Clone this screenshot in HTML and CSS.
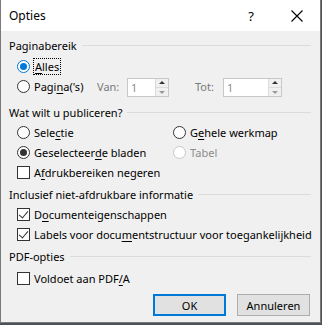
FILE: index.html
```html
<!DOCTYPE html>
<html lang="nl">
    <head>
        <meta charset="UTF-8" />
        <meta name="viewport" content="width=device-width, initial-scale=1.0" />
        <title>Opties</title>
        <link rel="stylesheet" href="styles.css">
    </head>
    <body>
        <div class="dialog">
            <div class="titlebar">
                <span class="title">Opties</span>
                <span class="help">?</span>
                <span class="close">
                    <svg width="12" height="12" viewBox="0 0 12 12"><path d="M0.5 0.5 L11.5 11.5 M11.5 0.5 L0.5 11.5" stroke="#000" stroke-width="1.1" fill="none"/></svg>
                </span>
            </div>
            <div class="content">
                <div class="group g1">
                    <div class="legend"><span>Paginabereik</span></div>
                    <div class="rows">
                        <div class="row">
                            <label class="opt"><span class="radio on"></span><span class="focus"><u>A</u>lles</span></label>
                        </div>
                        <div class="row">
                            <label class="opt pages"><span class="radio"></span>Pagi<u>n</u>a('s)</label>
                            <span class="dim van">Van:</span>
                            <span class="spin"><span class="val">1</span><span class="arrows"><i class="up"></i><i class="down"></i></span></span>
                            <span class="dim tot">Tot:</span>
                            <span class="spin wide"><span class="val">1</span><span class="arrows"><i class="up"></i><i class="down"></i></span></span>
                        </div>
                    </div>
                </div>

                <div class="group g2">
                    <div class="legend"><span>Wat wilt u publiceren?</span></div>
                    <div class="rows">
                        <div class="grid2">
                            <label class="opt"><span class="radio"></span>Sele<u>c</u>tie</label>
                            <label class="opt"><span class="radio"></span>G<u>e</u>hele werkmap</label>
                            <label class="opt"><span class="radio dot"></span>Geselecteer<u>d</u>e bladen</label>
                            <label class="opt disabled"><span class="radio"></span>Tabel</label>
                        </div>
                        <div class="row">
                            <label class="opt"><span class="check"></span>A<u>f</u>drukbereiken negeren</label>
                        </div>
                    </div>
                </div>

                <div class="group g3">
                    <div class="legend"><span>Inclusief niet-afdrukbare informatie</span></div>
                    <div class="rows">
                        <div class="row short">
                            <label class="opt"><span class="check on"></span>D<u>o</u>cumenteigenschappen</label>
                        </div>
                        <div class="row">
                            <label class="opt"><span class="check on"></span>Labels voor docu<u>m</u>entstructuur voor toegankelijkheid</label>
                        </div>
                    </div>
                </div>

                <div class="group g4">
                    <div class="legend"><span>PDF-opties</span></div>
                    <div class="rows">
                        <div class="row">
                            <label class="opt"><span class="check"></span>Voldoet aan PDF<u>/</u>A</label>
                        </div>
                    </div>
                </div>

                <div class="buttons">
                    <button class="btn default">OK</button>
                    <button class="btn">Annuleren</button>
                </div>
            </div>
        </div>
    </body>
</html>
```

FILE: styles.css
```css
* {
    padding: 0;
    margin: 0;
    box-sizing: border-box;
}
body {
    background-color: #4e5257;
    font-family: "Noto Sans", "Open Sans", sans-serif;
    font-size: 11px;
    color: #000;
}
.dialog {
    width: 321px;
    height: 323px;
    background-color: #f0f0f0;
    border: 1px solid #7a7a7a;
    border-top: none;
}
.titlebar {
    height: 31px;
    background-color: #fff;
    display: flex;
    align-items: center;
}
.title {
    margin-left: 8px;
    font-size: 12px;
    flex: 1;
}
.help {
    width: 46px;
    text-align: center;
    font-size: 13px;
}
.close {
    width: 46px;
    display: flex;
    justify-content: center;
}

.content {
    padding: 6px 8px 0 8px;
}
.legend {
    display: flex;
    align-items: center;
    height: 16px;
}
.legend::after {
    content: "";
    flex: 1;
    height: 1px;
    background-color: #dcdcdc;
    margin-left: 5px;
    margin-right: 1px;
}
.g2 {
    margin-top: 8px;
}
.g3,
.g4 {
    margin-top: 4px;
}
.g1 .rows,
.g3 .rows {
    margin-top: 3px;
}
.g2 .rows {
    margin-top: 2px;
}
.g4 .rows {
    margin-top: 4px;
}
.row {
    display: flex;
    align-items: center;
    height: 20px;
    padding-left: 8px;
}
.row.short {
    height: 19px;
}
.grid2 {
    display: grid;
    grid-template-columns: 156px 1fr;
    grid-auto-rows: 20px;
    padding-left: 8px;
}
.opt {
    display: flex;
    align-items: center;
    white-space: nowrap;
}
.opt u {
    text-decoration-thickness: 1px;
    text-underline-offset: 2px;
}
.disabled {
    color: #8c8c8c;
}

.radio {
    width: 13px;
    height: 13px;
    border: 1px solid #333;
    border-radius: 50%;
    background-color: #fff;
    margin-right: 4px;
    position: relative;
    flex-shrink: 0;
}
.radio.on {
    border-color: #0078d7;
}
.radio.on::after,
.radio.dot::after {
    content: "";
    position: absolute;
    left: 2px;
    top: 2px;
    width: 7px;
    height: 7px;
    border-radius: 50%;
    background-color: #0078d7;
}
.radio.dot::after {
    background-color: #333;
}
.disabled .radio {
    border-color: #c8c8c8;
}
.check {
    width: 13px;
    height: 13px;
    border: 1px solid #333;
    background-color: #fff;
    margin-right: 4px;
    position: relative;
    flex-shrink: 0;
}
.check.on::after {
    content: "";
    position: absolute;
    left: 3px;
    top: 0px;
    width: 4px;
    height: 8px;
    border: solid #333;
    border-width: 0 1px 1px 0;
    transform: rotate(40deg);
}
.focus {
    outline: 1px dotted #000;
    padding: 0 1px;
}

.pages {
    width: 80px;
}
.dim {
    color: #7a7a7a;
}
.van {
    width: 30px;
}
.tot {
    width: 28px;
    margin-left: 26px;
}
.spin {
    display: flex;
    width: 42px;
    height: 19px;
    border: 1px solid #c8c8c8;
    background-color: #fff;
    margin-top: 2px;
}
.spin.wide {
    width: 59px;
}
.val {
    flex: 1;
    color: #8c8c8c;
    padding-left: 3px;
    line-height: 18px;
}
.arrows {
    width: 13px;
    display: flex;
    flex-direction: column;
    background-color: #f0f0f0;
    border-left: 1px solid #dcdcdc;
}
.arrows i {
    flex: 1;
    position: relative;
}
.arrows .up {
    border-bottom: 1px solid #dcdcdc;
}
.arrows .up::after,
.arrows .down::after {
    content: "";
    position: absolute;
    left: 3px;
    border-left: 3px solid transparent;
    border-right: 3px solid transparent;
}
.arrows .up::after {
    top: 2px;
    border-bottom: 3px solid #333;
}
.arrows .down::after {
    top: 3px;
    border-top: 3px solid #9a9a9a;
}

.buttons {
    display: flex;
    justify-content: flex-end;
    gap: 11px;
    padding-right: 2px;
    margin-top: 6px;
}
.btn {
    width: 73px;
    height: 22px;
    font-family: inherit;
    font-size: 11px;
    background-color: #e1e1e1;
    border: 1px solid #adadad;
}
.btn.default {
    border: 2px solid #0078d7;
}
```
